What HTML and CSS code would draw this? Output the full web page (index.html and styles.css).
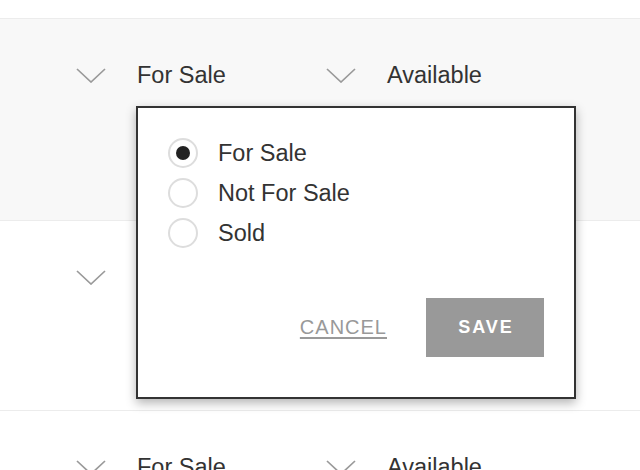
FILE: index.html
```html
<!DOCTYPE html>
<html>
<head>
<meta charset="utf-8">
<link rel="stylesheet" href="styles.css">
</head>
<body>
<div class="page">
  <div class="top"></div>
  <div class="row row-active">
    <div class="field">
      <svg class="chev" width="30" height="15" viewBox="0 0 30 15"><polyline points="1,1 15,14 29,1"/></svg>
      <span class="value">For Sale</span>
    </div>
    <div class="field">
      <svg class="chev" width="30" height="15" viewBox="0 0 30 15"><polyline points="1,1 15,14 29,1"/></svg>
      <span class="value">Available</span>
    </div>
  </div>
  <div class="row row-2">
    <div class="field">
      <svg class="chev" width="30" height="15" viewBox="0 0 30 15"><polyline points="1,1 15,14 29,1"/></svg>
      <span class="value">For Sale</span>
    </div>
    <div class="field">
      <svg class="chev" width="30" height="15" viewBox="0 0 30 15"><polyline points="1,1 15,14 29,1"/></svg>
      <span class="value">Available</span>
    </div>
  </div>
  <div class="row">
    <div class="field">
      <svg class="chev" width="30" height="15" viewBox="0 0 30 15"><polyline points="1,1 15,14 29,1"/></svg>
      <span class="value">For Sale</span>
    </div>
    <div class="field">
      <svg class="chev" width="30" height="15" viewBox="0 0 30 15"><polyline points="1,1 15,14 29,1"/></svg>
      <span class="value">Available</span>
    </div>
  </div>

  <div class="popup">
    <div class="options">
      <label class="option"><span class="radio checked"></span><span class="opt-text">For Sale</span></label>
      <label class="option"><span class="radio"></span><span class="opt-text">Not For Sale</span></label>
      <label class="option"><span class="radio"></span><span class="opt-text">Sold</span></label>
    </div>
    <div class="actions">
      <span class="cancel">CANCEL</span>
      <span class="save">SAVE</span>
    </div>
  </div>
</div>
</body>
</html>
```
FILE: styles.css
```css
* { box-sizing: border-box; }
html, body {
  margin: 0;
  padding: 0;
  background: #fff;
  overflow: hidden;
}
body {
  font-family: "Liberation Sans", Arial, Helvetica, sans-serif;
  color: #333;
}
.page {
  position: relative;
  width: 640px;
  height: 470px;
  overflow: hidden;
}
.top {
  height: 19px;
  border-bottom: 1px solid #ececec;
}
.row {
  display: flex;
  padding-top: 41px;
  padding-left: 76px;
  height: 190px;
  border-bottom: 1px solid #ececec;
}
.row-active {
  height: 202px;
  background: #f8f8f8;
}
.field {
  display: flex;
  align-items: center;
  width: 250px;
  height: 30px;
}
.chev {
  flex: none;
  margin-right: 31px;
}
.chev polyline {
  fill: none;
  stroke: #9a9a9a;
  stroke-width: 1.7;
}
.value {
  font-size: 23.5px;
  line-height: 30px;
  color: #333;
}
.popup {
  position: absolute;
  left: 136px;
  top: 106px;
  width: 440px;
  height: 293px;
  background: #fff;
  border: 2px solid #333;
  box-shadow: 0 4px 10px rgba(0, 0, 0, 0.3);
  padding: 30px 30px 40px;
  display: flex;
  flex-direction: column;
}
.options {
  display: flex;
  flex-direction: column;
  gap: 10px;
}
.option {
  display: flex;
  align-items: center;
  height: 30px;
}
.radio {
  width: 30px;
  height: 30px;
  border: 2px solid #ddd;
  border-radius: 50%;
  display: flex;
  align-items: center;
  justify-content: center;
  margin-right: 20px;
  flex: none;
}
.radio.checked::after {
  content: "";
  width: 14px;
  height: 14px;
  border-radius: 50%;
  background: #222;
}
.opt-text {
  font-size: 23.5px;
  line-height: 30px;
  color: #333;
}
.actions {
  margin-top: 50px;
  display: flex;
  justify-content: flex-end;
  align-items: center;
  gap: 39px;
}
.cancel {
  font-size: 20px;
  letter-spacing: 1px;
  color: #999;
  text-decoration: underline;
  text-decoration-thickness: 1.5px;
  text-underline-offset: 3px;
}
.save {
  width: 118px;
  height: 59px;
  background: #999;
  color: #fff;
  font-weight: bold;
  font-size: 18px;
  letter-spacing: 2px;
  text-indent: 2px;
  display: flex;
  align-items: center;
  justify-content: center;
}
```
